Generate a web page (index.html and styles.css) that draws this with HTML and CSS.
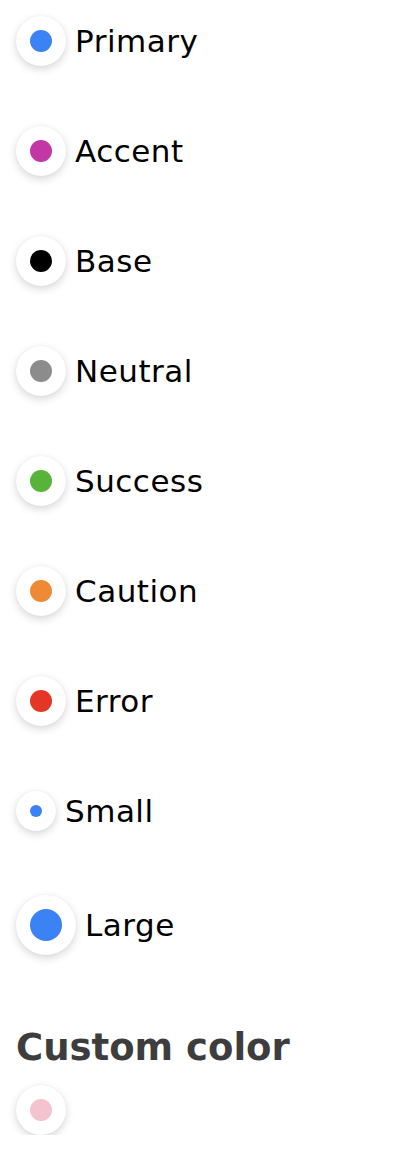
FILE: index.html
```html
<!DOCTYPE html>
<html lang="en">
<head>
<meta charset="utf-8">
<title>Radio colors</title>
<link rel="stylesheet" href="styles.css">
</head>
<body>
<main class="page">
  <ul class="list">
    <li class="item"><span class="radio md"><span class="dot primary"></span></span><span class="label">Primary</span></li>
    <li class="item"><span class="radio md"><span class="dot accent"></span></span><span class="label">Accent</span></li>
    <li class="item"><span class="radio md"><span class="dot base"></span></span><span class="label">Base</span></li>
    <li class="item"><span class="radio md"><span class="dot neutral"></span></span><span class="label">Neutral</span></li>
    <li class="item"><span class="radio md"><span class="dot success"></span></span><span class="label">Success</span></li>
    <li class="item"><span class="radio md"><span class="dot caution"></span></span><span class="label">Caution</span></li>
    <li class="item"><span class="radio md"><span class="dot error"></span></span><span class="label">Error</span></li>
    <li class="item item-sm"><span class="radio sm"><span class="dot primary"></span></span><span class="label">Small</span></li>
    <li class="item item-lg"><span class="radio lg"><span class="dot primary"></span></span><span class="label">Large</span></li>
  </ul>
  <h2 class="heading">Custom color</h2>
  <div class="item item-custom"><span class="radio md"><span class="dot custom"></span></span></div>
</main>
</body>
</html>
```
FILE: styles.css
```css
html, body {
  margin: 0;
  padding: 0;
  background: #ffffff;
}
body {
  font-family: "DejaVu Sans", "Noto Sans", sans-serif;
  color: #000;
}
.page {
  padding: 16px 16px 0 16px;
}
.list {
  list-style: none;
  margin: 0;
  padding: 0;
  display: flex;
  flex-direction: column;
  gap: 60px;
}
.item {
  display: flex;
  align-items: center;
  gap: 9px;
}
.item-sm {
  margin-top: 5px;
}
.item-lg {
  margin-top: 4px;
}
.radio {
  flex: none;
  display: flex;
  align-items: center;
  justify-content: center;
  border-radius: 50%;
  background: #fff;
  box-shadow: 0 3px 8px rgba(0, 0, 0, 0.16), 0 0 2px rgba(0, 0, 0, 0.05);
}
.radio.md { width: 50px; height: 50px; }
.radio.sm { width: 40px; height: 40px; }
.radio.lg { width: 60px; height: 60px; }
.dot {
  display: block;
  border-radius: 50%;
}
.md .dot { width: 22px; height: 22px; }
.sm .dot { width: 12px; height: 12px; }
.lg .dot { width: 32px; height: 32px; }
.primary { background: #3b82f4; }
.accent { background: #c236a6; }
.base { background: #000000; }
.neutral { background: #8c8c8c; }
.success { background: #58b33a; }
.caution { background: #ee8a36; }
.error { background: #e43526; }
.custom { background: #f5c3cf; }
.label {
  font-size: 31px;
  line-height: 1;
  letter-spacing: 0.5px;
  color: #000;
}
.heading {
  margin: 74px 0 0 0;
  font-size: 37px;
  line-height: 1;
  font-weight: 700;
  color: #3d3d3d;
}
.item-custom {
  margin-top: 19px;
}
```
